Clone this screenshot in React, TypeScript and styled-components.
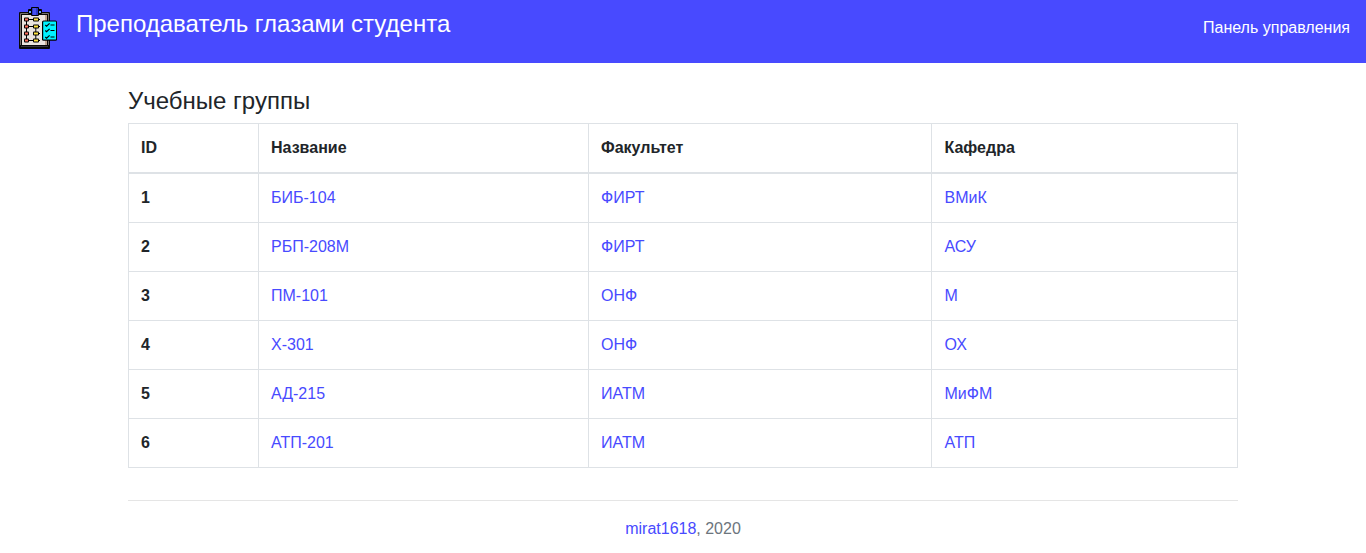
import React from 'react';
import styled, { createGlobalStyle } from 'styled-components';

const GlobalStyle = createGlobalStyle`
  *, *::before, *::after { box-sizing: border-box; }
  body {
    margin: 0;
    background: #fff;
    color: #212529;
    font-family: "Liberation Sans", Arial, sans-serif;
    font-size: 16px;
    line-height: 24px;
  }
`;

const Link = styled.a`
  color: #484aff;
  text-decoration: none;
  &:hover { text-decoration: underline; }
`;

const Navbar = styled.header`
  display: flex;
  align-items: flex-start;
  justify-content: space-between;
  min-height: 63px;
  padding: 8px 16px;
  background: #484aff;
`;

const Brand = styled.a`
  display: flex;
  align-items: flex-start;
  gap: 16px;
  color: #fff;
  text-decoration: none;
`;

const Logo = styled.svg`
  display: block;
  width: 44px;
  height: 42px;
  overflow: visible;
`;

const BrandName = styled.span`
  padding-top: 1px;
  font-size: 24px;
  line-height: 29px;
`;

const NavLink = styled.a`
  display: block;
  padding: 8px 0;
  color: #fff;
  text-decoration: none;
`;

const Container = styled.div`
  width: 100%;
  max-width: 1140px;
  margin: 0 auto;
  padding: 0 15px;
`;

const Main = styled.main`
  padding: 23px 0 16px;
`;

const Heading = styled.h1`
  margin: 0 0 8px;
  font-size: 24px;
  font-weight: 400;
  line-height: 29px;
`;

const Table = styled.table`
  width: 100%;
  margin-bottom: 16px;
  border: 1px solid #dee2e6;
  border-collapse: collapse;
`;

const IdColumn = styled.col`
  width: 130px;
`;

const Cell = styled.td`
  padding: 12px;
  border: 1px solid #dee2e6;
  vertical-align: top;
`;

const HeadCell = styled.th`
  padding: 12px;
  border: 1px solid #dee2e6;
  text-align: left;
  vertical-align: top;
  thead & { border-bottom-width: 2px; }
`;

const Footer = styled.footer`
  padding: 16px 0;
  border-top: 1px solid #e5e5e5;
  color: #6c757d;
  text-align: center;
`;

const groups = [
  { id: 1, name: 'БИБ-104', faculty: 'ФИРТ', department: 'ВМиК' },
  { id: 2, name: 'РБП-208М', faculty: 'ФИРТ', department: 'АСУ' },
  { id: 3, name: 'ПМ-101', faculty: 'ОНФ', department: 'М' },
  { id: 4, name: 'Х-301', faculty: 'ОНФ', department: 'ОХ' },
  { id: 5, name: 'АД-215', faculty: 'ИАТМ', department: 'МиФМ' },
  { id: 6, name: 'АТП-201', faculty: 'ИАТМ', department: 'АТП' },
];

function ClipboardLogo() {
  return (
    <Logo viewBox="0 0 44 42" aria-hidden="true">
      <rect x="3" y="4" width="31" height="37" rx="1" fill="#080808" />
      <path d="M4.5 37V5.5h28V37" fill="none" stroke="#77716c" />
      <path d="M5 38.5h27" stroke="#34343c" />
      <rect x="6" y="7" width="25" height="30" fill="#ebe5df" />
      <path d="M29 7h2v30h-2z" fill="#c5aa93" />
      <rect x="12" y="1" width="14" height="5" rx="1" fill="#000" />
      <path d="M13 3h12v2H13z" fill="#6aa0ff" />
      <rect x="15" y="-1" width="8" height="9" rx="1" fill="#000" />
      <path d="M16 0h6v7h-6z" fill="#2b35c4" />
      <path d="M17 0h3v7h-3z" fill="#4550f0" />
      <path d="M10.5 12v7M10.5 19v13M19.8 19v13" stroke="#000" />
      {[11.5, 18.5, 25.5, 32.5].map((y, i) => (
        <g key={y}>
          <path d={i === 2 ? `M17 ${y}h7` : `M8 ${y}h16`} stroke="#000" />
          <rect x="8" y={y - 2} width="5" height="4" rx="1" fill="#000" />
          <rect x="9" y={y - 1} width="3" height="2" fill="#ff705d" />
          <rect x="17" y={y - 2} width="6" height="4" rx="1" fill="#000" />
          <rect x="18" y={y - 1} width="4" height="2" fill="#ffe33d" />
        </g>
      ))}
      <rect x="26" y="12.4" width="15" height="20.4" rx="1.5" fill="#000" />
      <rect x="27.2" y="13.6" width="12.8" height="18" rx=".5" fill="#00f3ff" />
      {[17, 22.5, 29].map((y) => (
        <path key={y} d={`M29.3 ${y}l1.3 1.2 3-2.8M34.5 ${y}h4`} fill="none" stroke="#000" strokeWidth="1.2" />
      ))}
    </Logo>
  );
}

export default function App() {
  return (
    <>
      <GlobalStyle />
      <Navbar>
        <Brand href="#">
          <ClipboardLogo />
          <BrandName>Преподаватель глазами студента</BrandName>
        </Brand>
        <nav>
          <NavLink href="#panel">Панель управления</NavLink>
        </nav>
      </Navbar>
      <Container>
        <Main>
          <Heading>Учебные группы</Heading>
          <Table>
            <colgroup>
              <IdColumn />
              <col />
              <col />
              <col />
            </colgroup>
            <thead>
              <tr>
                <HeadCell scope="col">ID</HeadCell>
                <HeadCell scope="col">Название</HeadCell>
                <HeadCell scope="col">Факультет</HeadCell>
                <HeadCell scope="col">Кафедра</HeadCell>
              </tr>
            </thead>
            <tbody>
              {groups.map((group) => (
                <tr key={group.id}>
                  <HeadCell scope="row">{group.id}</HeadCell>
                  <Cell><Link href="#group">{group.name}</Link></Cell>
                  <Cell><Link href="#faculty">{group.faculty}</Link></Cell>
                  <Cell><Link href="#department">{group.department}</Link></Cell>
                </tr>
              ))}
            </tbody>
          </Table>
        </Main>
        <Footer>
          <Link href="#author">mirat1618</Link>, 2020
        </Footer>
      </Container>
    </>
  );
}
